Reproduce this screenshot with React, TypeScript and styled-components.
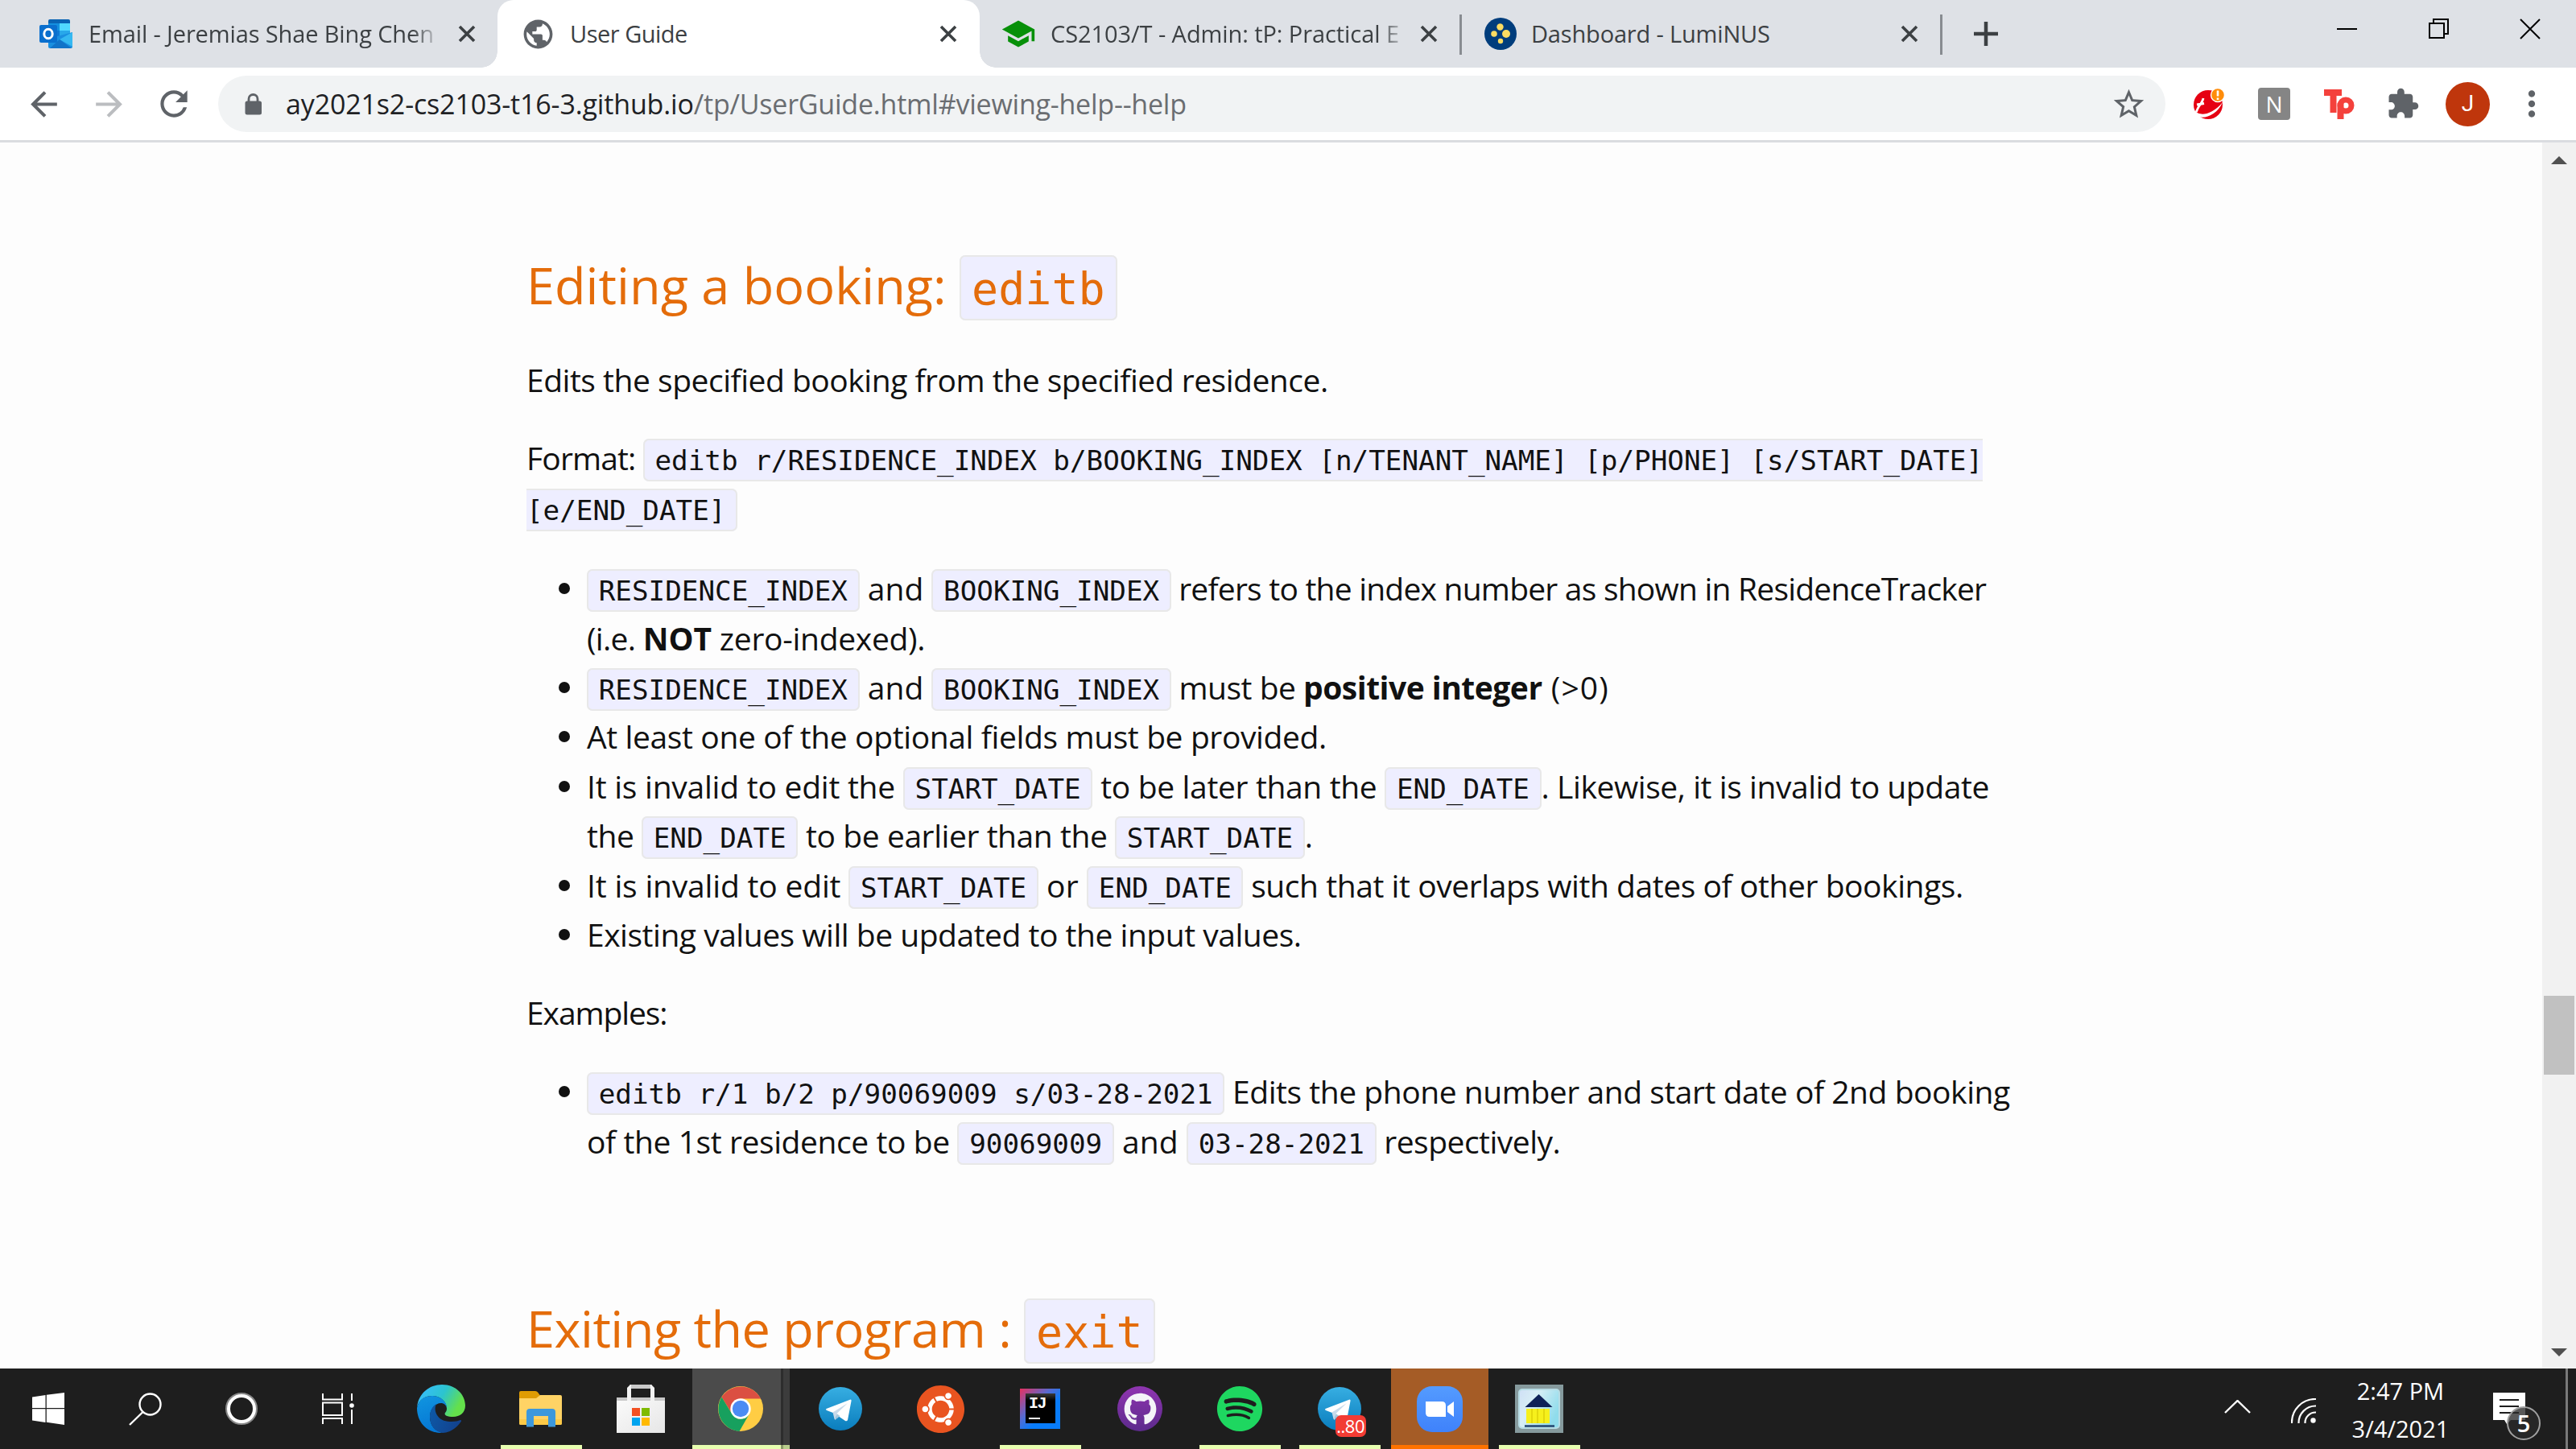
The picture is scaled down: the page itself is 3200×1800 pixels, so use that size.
import React from 'react';
import styled, { createGlobalStyle, css } from 'styled-components';
import { MdArrowBack, MdArrowForward, MdRefresh, MdStarBorder, MdExtension, MdMoreVert, MdPublic, MdSchool } from 'react-icons/md';
import { FaGithub, FaSpotify, FaUbuntu } from 'react-icons/fa';

const sans = `"Open Sans", "Noto Sans", sans-serif`;
const mono = `"DejaVu Sans Mono", monospace`;

const Global = createGlobalStyle`
  *, *::before, *::after { box-sizing: border-box; }
  html, body { margin: 0; padding: 0; overflow: hidden; }
  body { font-family: ${sans}; }
  svg { display: block; flex: none; }
`;

const Screen = styled.div`
  width: 3200px;
  height: 1800px;
  display: flex;
  flex-direction: column;
  background: #fdfdfd;
  overflow: hidden;
`;

/* ---------- tab strip ---------- */
const TabStrip = styled.div`
  height: 84px;
  flex: none;
  display: flex;
  background: #dee1e6;
`;

const Tab = styled.div<{ $w: number; $pl: number; $active?: boolean }>`
  width: ${p => p.$w}px;
  padding-left: ${p => p.$pl}px;
  flex: none;
  display: flex;
  align-items: center;
  height: 84px;
  position: relative;
  ${p =>
    p.$active &&
    css`
      background: #fff;
      border-radius: 20px 20px 0 0;
      &::before,
      &::after {
        content: '';
        position: absolute;
        bottom: 0;
        width: 20px;
        height: 20px;
      }
      &::before {
        left: -20px;
        background: radial-gradient(circle at 0 0, transparent 19.5px, #fff 20px);
      }
      &::after {
        right: -20px;
        background: radial-gradient(circle at 100% 0, transparent 19.5px, #fff 20px);
      }
    `}
`;

const TabIcon = styled.div<{ $w: number; $mr: number }>`
  width: ${p => p.$w}px;
  margin-right: ${p => p.$mr}px;
  flex: none;
  display: flex;
  justify-content: center;
  color: #5f6368;
`;

const TabTitle = styled.div<{ $w: number; $fade?: boolean; $ls?: number }>`
  width: ${p => p.$w}px;
  flex: none;
  white-space: nowrap;
  font-size: 29px;
  line-height: 44px;
  letter-spacing: ${p => p.$ls ?? 0}px;
  color: #3c4043;
  ${p => p.$fade && css`-webkit-mask-image: linear-gradient(90deg, #000 calc(100% - 36px), transparent);`}
`;

const TabDivider = styled.div`
  width: 3px;
  height: 50px;
  margin-top: 18px;
  flex: none;
  background: #888c91;
`;

const NewTab = styled.div`
  width: 108px;
  flex: none;
  display: flex;
  align-items: center;
  justify-content: center;
`;

const WindowControls = styled.div`
  margin-left: auto;
  display: flex;
  height: 71px;
`;

const WindowButton = styled.div`
  width: 114px;
  display: flex;
  align-items: center;
  justify-content: center;
`;

/* ---------- toolbar ---------- */
const Toolbar = styled.div`
  height: 90px;
  flex: none;
  display: flex;
  align-items: center;
  background: #fff;
`;

const NavButtons = styled.div`
  width: 271px;
  flex: none;
  display: flex;
  align-items: center;
  padding-left: 30px;
  gap: 31.5px;
  color: #5f6368;
`;

const Faded = styled.div`
  color: #bbbdc0;
`;

const Omnibox = styled.div`
  width: 2419px;
  height: 70px;
  flex: none;
  border-radius: 35px;
  background: #f1f3f4;
  display: flex;
  align-items: center;
  padding: 0 23px 0 28px;
  color: #5f6368;
`;

const Url = styled.div`
  margin-left: 25px;
  flex: 1;
  font-size: 34px;
  line-height: 50px;
  letter-spacing: -0.22px;
  white-space: nowrap;
  color: #6a6d71;
`;

const UrlHost = styled.span`
  color: #202124;
  letter-spacing: -0.15px;
`;

const Extensions = styled.div`
  flex: 1;
  display: flex;
  align-items: center;
  color: #5f6368;
`;

const ExtSlot = styled.div<{ $w: number }>`
  width: ${p => p.$w}px;
  flex: none;
  display: flex;
  align-items: center;
  justify-content: center;
`;

const NoteBadge = styled.div`
  width: 40px;
  height: 40px;
  border-radius: 4px;
  background: #858585;
  color: #fff;
  font: 400 28px/40px ${sans};
  text-align: center;
`;

const Avatar = styled.div`
  width: 55px;
  height: 55px;
  border-radius: 50%;
  background: #bf360c;
  color: #fff;
  font: 400 28px/54px Roboto, sans-serif;
  text-align: center;
`;

const ToolbarEdge = styled.div`
  height: 3px;
  flex: none;
  background: #dadce0;
`;

/* ---------- page ---------- */
const Viewport = styled.div`
  height: 1523px;
  flex: none;
  display: flex;
  overflow: hidden;
`;

const Article = styled.main`
  flex: 1;
  padding: 129px 0 0 654px;
  color: #111;
  font-size: 39px;
  line-height: 61.4px;
  white-space: pre;
  overflow: hidden;
`;

const Heading = styled.h2<{ $mt: number }>`
  margin: ${p => p.$mt}px 0 0;
  font-size: 63px;
  font-weight: 400;
  line-height: 96px;
  color: #e46c0a;
`;

const Para = styled.p<{ $mt: number }>`
  margin: ${p => p.$mt}px 0 0;
`;

const List = styled.ul<{ $mt: number }>`
  list-style: none;
  margin: ${p => p.$mt}px 0 0;
  padding: 0 0 0 40px;
`;

const Item = styled.li`
  display: grid;
  grid-template-columns: 14px auto;
  column-gap: 21px;
  &::before {
    content: '';
    width: 14px;
    height: 14px;
    margin-top: 24px;
    border-radius: 50%;
    background: #111;
  }
`;

const Code = styled.code`
  font-family: ${mono};
  font-size: 34.25px;
  line-height: 0;
  padding: 5px 12.7px 4px;
  border: 2px solid #e8e8e8;
  border-radius: 7px;
  background: #eeeeff;
`;

const HeadingCode = styled(Code)`
  font-size: 55px;
  padding: 8px 13px 5px;
`;

const T = styled.span<{ $ls?: number; $b?: boolean }>`
  letter-spacing: ${p => p.$ls ?? 0}px;
  font-weight: ${p => (p.$b ? 700 : 400)};
`;

const Scrollbar = styled.div`
  width: 42px;
  flex: none;
  background: #f1f1f1;
  display: flex;
  flex-direction: column;
  align-items: center;
  padding: 17px 0 15px;
`;

const Thumb = styled.div`
  width: 38px;
  height: 98px;
  margin-top: 1033px;
  background: #c1c1c1;
`;

const Spring = styled.div`
  flex: 1;
`;

/* ---------- taskbar ---------- */
const Taskbar = styled.div`
  height: 100px;
  flex: none;
  display: flex;
  background: #1e1e1e;
  color: #fff;
`;

const SystemCell = styled.div`
  width: 120px;
  height: 80px;
  margin-top: 10px;
  display: flex;
  align-items: center;
  justify-content: center;
`;

const Apps = styled.div`
  display: flex;
  gap: 3.03px;
  margin-left: 7.5px;
`;

const AppCell = styled.div<{ $bg?: string; $line?: string; $full?: boolean }>`
  width: 121px;
  height: 100px;
  position: relative;
  display: flex;
  align-items: center;
  justify-content: center;
  background: ${p => p.$bg ?? 'transparent'};
  &::after {
    content: '';
    position: absolute;
    bottom: 0;
    left: ${p => (p.$full ? 0 : 10)}px;
    right: ${p => (p.$full ? 0 : 10)}px;
    height: 5px;
    background: ${p => p.$line ?? 'transparent'};
  }
`;

const Disc = styled.div<{ $s: number; $bg: string }>`
  width: ${p => p.$s}px;
  height: ${p => p.$s}px;
  border-radius: 50%;
  background: ${p => p.$bg};
  display: flex;
  align-items: center;
  justify-content: center;
`;

const IdeFrame = styled.div`
  width: 50px;
  height: 50px;
  padding: 6px 7px;
  background: linear-gradient(135deg, #e8305f 0%, #5a6ad0 38%, #087cfa 62%);
`;

const IdeFace = styled.div`
  width: 37px;
  height: 37px;
  background: linear-gradient(#3a3a3a, #000 9px);
  color: #fff;
  font: 700 20px/25px "Liberation Mono", monospace;
  letter-spacing: -1.5px;
  padding: 0 4px;
  &::after {
    content: '';
    display: block;
    width: 14px;
    height: 2px;
    margin-top: 5px;
    background: #fff;
  }
`;

const CountBadge = styled.div`
  position: absolute;
  left: 55px;
  top: 58px;
  width: 38px;
  height: 27px;
  border-radius: 7px;
  background: #f23c34;
  color: #fff;
  font: 400 22px/27px ${sans};
  letter-spacing: -0.5px;
  text-align: center;
`;

const StackEdge = styled.div`
  position: absolute;
  z-index: 1;
  right: 0;
  top: 0;
  width: 11px;
  height: 100px;
  background: rgba(0, 0, 0, 0.2);
  border-left: 3px solid rgba(0, 0, 0, 0.25);
`;

const Tray = styled.div`
  margin-left: auto;
  display: flex;
  align-items: center;
`;

const TraySlot = styled.div<{ $pt?: number; $pb?: number }>`
  width: 82px;
  padding: ${p => p.$pt ?? 0}px 0 ${p => p.$pb ?? 0}px;
  display: flex;
  justify-content: center;
`;

const Clock = styled.div`
  width: 130px;
  height: 100px;
  margin-left: 15px;
  padding-top: 4px;
  text-align: center;
  font-size: 29px;
  line-height: 47px;
  white-space: nowrap;
`;

const ShowDesktop = styled.div`
  width: 13px;
  height: 100px;
  border-left: 3px solid #7a7a7a;
`;

const Notice = styled.div`
  width: 90px;
  height: 100px;
  margin-left: 50px;
  position: relative;
  padding-top: 30px;
`;

const NoticeCount = styled.div`
  position: absolute;
  left: 17px;
  top: 47px;
  width: 42px;
  height: 42px;
  border-radius: 50%;
  border: 2px solid #a0a0a0;
  background: rgba(42, 42, 42, 0.78);
  font: 600 29px/38px ${sans};
  text-align: center;
`;

/* ---------- drawings ---------- */
const Cross = () => (
  <svg width="22" height="22" viewBox="0 0 22 22" stroke="#3c4043" strokeWidth="3.6">
    <path d="M2 2 20 20M20 2 2 20" />
  </svg>
);

const Lock = () => (
  <svg width="31" height="28" viewBox="0 0 31 28">
    <path d="M10 12V8a5.500 5.500 0 0 1 11 0v4" fill="none" stroke="#5f6368" strokeWidth="2.800" />
    <rect x="5.500" y="10.500" width="20.500" height="17" rx="2.500" fill="#5f6368" />
  </svg>
);

const Outlook = () => (
  <svg width="41" height="36" viewBox="0 0 41 36">
    <path d="M13 0h23q2 0 2 2v22H11V2q0-2 2-2z" fill="#0a64b4" />
    <path d="M11 5h14v9H11z" fill="#1490df" />
    <path d="M25 5h13v9H25z" fill="#50d9ff" />
    <path d="M11 14h14v10H11z" fill="#0f78d4" />
    <path d="M25 14h13v10H25z" fill="#28a8ea" />
    <path d="M11 24 41 16v18q0 2-2 2H13q-2 0-2-2z" fill="#1a8fe0" />
    <path d="M25 25 41 16v18z" fill="#35b8f1" />
    <path d="m13 36 12-11 15 11z" fill="#1273c8" />
    <rect y="7" width="22" height="22" rx="2" fill="#0a6fce" />
    <ellipse cx="11" cy="18" rx="5.2" ry="5.8" fill="none" stroke="#fff" strokeWidth="3" />
  </svg>
);

const Luminus = () => (
  <svg width="40" height="40" viewBox="0 0 40 40">
    <circle cx="20" cy="20" r="20" fill="#003d7c" />
    <g fill="#fbdc62">
      <circle cx="19.5" cy="11.5" r="4.2" />
      <circle cx="12" cy="20" r="3.8" />
      <circle cx="27" cy="20" r="5" />
      <circle cx="20" cy="29" r="3.2" />
    </g>
  </svg>
);

const Trend = () => (
  <svg width="40" height="40" viewBox="0 0 40 40">
    <circle cx="19" cy="21" r="18" fill="#e60012" />
    <path d="M3.500 28c2 7 19 8 33.500-10-8 18-27 23-34.500 15z" fill="#fff" />
    <path d="M13 13C12 19 6 23 4.500 30M5 21l9-1.500" fill="none" stroke="#fff" strokeWidth="2.800" />
    <circle cx="31" cy="9" r="8.500" fill="#ff8c0a" stroke="#fff" strokeWidth="1.4" />
    <path d="M31 3.500v7M31 12.500v2.500" stroke="#fff" strokeWidth="2.600" />
  </svg>
);

const Tp = () => (
  <svg width="38" height="37" viewBox="0 0 38 37" fill="none" stroke="#f4413c">
    <path d="M0 4h22" strokeWidth="8" />
    <path d="M11.500 4v25" strokeWidth="8" />
    <path d="M20.500 17v20" strokeWidth="8" />
    <circle cx="27" cy="20" r="7" strokeWidth="7" />
  </svg>
);

const Windows = () => (
  <svg width="40" height="40" viewBox="0 0 40 40" fill="#fff">
    <path d="M0 5.500 16.500 3v16H0zM17.800 2.800 40 0v19H17.800zM0 20.300h16.500V37L0 34.500zM17.800 20.300H40V40l-22.200-3.200z" />
  </svg>
);

const Search = () => (
  <svg width="41" height="41" viewBox="0 0 41 41" fill="none" stroke="#fff" strokeWidth="2.400">
    <circle cx="26.500" cy="14.500" r="13" />
    <path d="M17.500 24 1 40" />
  </svg>
);

const Cortana = () => (
  <svg width="40" height="40" viewBox="0 0 40 40" fill="none">
    <circle cx="20" cy="20" r="18.500" stroke="#8a8a8a" strokeWidth="3" />
    <circle cx="20" cy="20" r="16" stroke="#fff" strokeWidth="4" />
  </svg>
);

const TaskView = () => (
  <svg width="40" height="38" viewBox="0 0 40 38" fill="none" stroke="#fff" strokeWidth="2">
    <path d="M1 0v7.500h24V0M1 38v-7h24v7M1 11.500h24v15.500H1zM37 0v9M37 20v18" />
    <circle cx="37" cy="15" r="2.800" fill="#fff" stroke="none" />
  </svg>
);

const Edge = () => (
  <svg width="60" height="60" viewBox="0 0 60 60">
    <defs>
      <linearGradient id="edgeTop" x1="0" y1="0.2" x2="1" y2="0.6">
        <stop offset="0" stopColor="#38bcff" />
        <stop offset="0.5" stopColor="#2cc4cf" />
        <stop offset="0.9" stopColor="#64e04b" />
      </linearGradient>
      <linearGradient id="edgeBody" x1="0" y1="0" x2="0.3" y2="1">
        <stop offset="0" stopColor="#1196e0" />
        <stop offset="1" stopColor="#0577d4" />
      </linearGradient>
      <linearGradient id="edgeDeep" x1="0" y1="0" x2="1" y2="0.4">
        <stop offset="0" stopColor="#0d5aa8" />
        <stop offset="1" stopColor="#12438f" />
      </linearGradient>
    </defs>
    <path d="M0 28C2 11 15 0 31 0c18 0 29 13 29 26 0 9-7 14-15 14-7 0-12-2-10-5 1-1 2-3 2-5 0-9-8-16-18-16C9 14 2 20 0 28z" fill="url(#edgeTop)" />
    <path d="M0 29C2 19 9 14 19 14c10 0 18 7 18 15-1-4-4-6-7-6-8 0-14 8-14 17 0 11 7 18 16 20C14 61 0 48 0 29z" fill="url(#edgeBody)" />
    <path d="M24 24c-2 4-2 9 1 14 4 7 12 8 18 8 5 0 8-1 11-2 1 0 1 1 1 1.500C49 55 39 60 32 60c-9-1-16-9-16-20 0-7 3-13 8-16z" fill="url(#edgeDeep)" />
  </svg>
);

const Explorer = () => (
  <svg width="54" height="46" viewBox="0 0 54 46">
    <path d="M0 3q0-2 2-2h18q2 0 3 1.500l3 4-4 4H0z" fill="#e09c02" />
    <path d="M0 10h21l5-4h25q2 0 2 2v33q0 2-2 2H2q-2 0-2-2z" fill="#ffd365" />
    <path d="M0 36h53v5q0 2-2 2H2q-2 0-2-2z" fill="#fbc947" />
    <path d="M9 45.500V27q0-4 4-4h28q4 0 4 4v18.500h-9V32H18v13.500z" fill="#3c98dc" />
  </svg>
);

const Store = () => (
  <svg width="60" height="60" viewBox="0 0 60 60">
    <defs>
      <linearGradient id="bag" x1="0" y1="0" x2="1" y2="1">
        <stop offset="0" stopColor="#fafafa" />
        <stop offset="1" stopColor="#e6e6e6" />
      </linearGradient>
    </defs>
    <path d="M0 16h60v5H0z" fill="#c8c8c8" />
    <path d="M16.500 0h27v5h-27z" fill="#c9c9c9" />
    <path d="M13 20V4l4-4h1v20zM47 20V4l-4-4h-1v20z" fill="#f2f2f2" />
    <path d="M0 20h60v40H0z" fill="url(#bag)" />
    <path d="M19 29h10v10H19z" fill="#f25022" />
    <path d="M31 29h10v10H31z" fill="#7fba00" />
    <path d="M19 41h10v10H19z" fill="#00a4ef" />
    <path d="M31 41h10v10H31z" fill="#ffb900" />
  </svg>
);

const Chrome = () => (
  <svg width="56" height="56" viewBox="0 0 56 56">
    <circle cx="28" cy="28" r="28" fill="#ffcd44" />
    <path d="M28 15.500h25A28 28 0 0 0 4.500 13.500L16 32l6-12z" fill="#db4f42" />
    <path d="M4.500 13.500A28 28 0 0 0 26.500 56L38.500 35l-5 5-9 .5-9-9z" fill="#17a05e" />
    <circle cx="28" cy="28" r="12.700" fill="#fff" />
    <circle cx="28" cy="28" r="10.200" fill="#4b8bf4" />
  </svg>
);

const Telegram = () => (
  <svg width="54" height="54" viewBox="0 0 54 54">
    <defs>
      <linearGradient id="tg" x1="0" y1="0" x2="0" y2="1">
        <stop offset="0" stopColor="#37aee2" />
        <stop offset="1" stopColor="#0a7dbd" />
      </linearGradient>
    </defs>
    <circle cx="27" cy="27" r="27" fill="url(#tg)" />
    <path d="M9.500 27 39.500 15.500q1.500 0 1 2L36 41q-1 2-3 1L19 32.500l-9-3.500q-2-1-.5-2z" fill="#fff" />
    <path d="M17.500 31.500 36 20 22.500 33 21 40.500q-1 .5-1.500-1z" fill="#c8daea" />
    <path d="m21 40.500 1.500-7.500 4 3z" fill="#a9c9dd" />
  </svg>
);

const ZoomLogo = () => (
  <svg width="57" height="57" viewBox="0 0 57 57">
    <defs>
      <linearGradient id="zm" x1="0" y1="0" x2="0" y2="1">
        <stop offset="0" stopColor="#549bff" />
        <stop offset="1" stopColor="#3f82fb" />
      </linearGradient>
    </defs>
    <rect width="57" height="57" rx="19" fill="url(#zm)" />
    <path d="M11 19h20q5 0 5 5v14H16q-5 0-5-5zM38 25l8-6v19l-8-6z" fill="#fff" />
  </svg>
);

const HouseApp = () => (
  <svg width="60" height="60" viewBox="0 0 60 60">
    <defs>
      <linearGradient id="hs" x1="0" y1="0" x2="1" y2="0.5">
        <stop offset="0" stopColor="#cfe0f6" />
        <stop offset="0.4" stopColor="#d8eef5" />
        <stop offset="1" stopColor="#8fdcec" />
      </linearGradient>
    </defs>
    <path d="M0 0h60v60H0z" fill="#869a9d" />
    <rect x="5" y="6" width="50" height="48" rx="4" fill="url(#hs)" stroke="#b7dce4" strokeWidth="2" />
    <path d="m29.500 12 17 16h-34z" fill="#0f2157" />
    <path d="M14 30h29v18H14z" fill="#f6f01c" />
    <path d="M21 30v18M28 30v18M36 30v18" stroke="#ddd00a" strokeWidth="1.500" />
    <path d="M12 51.500h37" stroke="#23456f" strokeWidth="2.500" />
  </svg>
);

const LIME = '#e8ffb0';

export default function App() {
  return (
    <Screen>
      <Global />
      <TabStrip>
        <Tab $w={618} $pl={49}>
          <TabIcon $w={41} $mr={20}><Outlook /></TabIcon>
          <TabTitle $w={438} $ls={-0.13} $fade>Email - Jeremias Shae Bing Chen</TabTitle>
          <TabIcon $w={64} $mr={0}><Cross /></TabIcon>
        </Tab>
        <Tab $w={599} $pl={28} $active>
          <TabIcon $w={44} $mr={18}><MdPublic size={43} /></TabIcon>
          <TabTitle $w={430} $ls={-0.5}>User Guide</TabTitle>
          <TabIcon $w={80} $mr={0}><Cross /></TabIcon>
        </Tab>
        <Tab $w={596} $pl={26}>
          <TabIcon $w={44} $mr={18}><MdSchool size={44} color="#079009" /></TabIcon>
          <TabTitle $w={444} $ls={-0.08} $fade>CS2103/T - Admin: tP: Practical E</TabTitle>
          <TabIcon $w={52} $mr={0}><Cross /></TabIcon>
        </Tab>
        <TabDivider />
        <Tab $w={594} $pl={28}>
          <TabIcon $w={40} $mr={18}><Luminus /></TabIcon>
          <TabTitle $w={430} $ls={-0.17}>Dashboard - LumiNUS</TabTitle>
          <TabIcon $w={80} $mr={0}><Cross /></TabIcon>
        </Tab>
        <TabDivider />
        <NewTab>
          <svg width="30" height="30" viewBox="0 0 30 30" stroke="#3c4043" strokeWidth="4.500"><path d="M15 0v30M0 15h30" /></svg>
        </NewTab>
        <WindowControls>
          <WindowButton><svg width="25" height="2"><path d="M0 0h25v2H0z" /></svg></WindowButton>
          <WindowButton>
            <svg width="25" height="25" viewBox="0 0 25 25" fill="none" stroke="#000" strokeWidth="2"><path d="M1 6h18v18H1zM6 6V1h18v18h-5" /></svg>
          </WindowButton>
          <WindowButton>
            <svg width="26" height="26" viewBox="0 0 26 26" stroke="#000" strokeWidth="2"><path d="M1 1 25 25M25 1 1 25" /></svg>
          </WindowButton>
        </WindowControls>
      </TabStrip>

      <Toolbar>
        <NavButtons>
          <MdArrowBack size={49} />
          <Faded><MdArrowForward size={49} /></Faded>
          <MdRefresh size={50} />
        </NavButtons>
        <Omnibox>
          <Lock />
          <Url><UrlHost>ay2021s2-cs2103-t16-3.github.io</UrlHost>/tp/UserGuide.html#viewing-help--help</Url>
          <MdStarBorder size={45} />
        </Omnibox>
        <Extensions>
          <ExtSlot $w={107}><Trend /></ExtSlot>
          <ExtSlot $w={56}><NoteBadge>N</NoteBadge></ExtSlot>
          <ExtSlot $w={105}><Tp /></ExtSlot>
          <ExtSlot $w={54}><MdExtension size={42} /></ExtSlot>
          <ExtSlot $w={107}><Avatar>J</Avatar></ExtSlot>
          <ExtSlot $w={52}><MdMoreVert size={50} /></ExtSlot>
        </Extensions>
      </Toolbar>
      <ToolbarEdge />

      <Viewport>
        <Article>
          <Heading $mt={0}>
            <T $ls={0.03}>Editing a booking: </T><HeadingCode>editb</HeadingCode>
          </Heading>
          <Para $mt={39.4}><T $ls={-0.48}>Edits the specified booking from the specified residence.</T></Para>
          <Para $mt={35.6}>
            <T $ls={-0.85}>Format: </T>
            <Code>editb r/RESIDENCE_INDEX b/BOOKING_INDEX [n/TENANT_NAME] [p/PHONE] [s/START_DATE]<br />[e/END_DATE]</Code>
          </Para>
          <List $mt={38.9}>
            <Item>
              <div>
                <Code>RESIDENCE_INDEX</Code><T> and </T><Code>BOOKING_INDEX</Code><T $ls={-0.78}> refers to the index number as shown in ResidenceTracker</T><br />
                <T $ls={-0.7}>(i.e. </T><T $b>NOT</T><T $ls={-0.3}> zero-indexed).</T>
              </div>
            </Item>
            <Item>
              <div>
                <Code>RESIDENCE_INDEX</Code><T> and </T><Code>BOOKING_INDEX</Code><T $ls={-0.5}> must be </T><T $b $ls={-0.5}>positive integer</T><T $ls={1.1}> (&gt;0)</T>
              </div>
            </Item>
            <Item><div><T $ls={-0.38}>At least one of the optional fields must be provided.</T></div></Item>
            <Item>
              <div>
                <T $ls={-0.24}>It is invalid to edit the </T><Code>START_DATE</Code><T $ls={-0.34}> to be later than the </T><Code>END_DATE</Code><T $ls={-0.43}>. Likewise, it is invalid to update</T><br />
                <T $ls={-0.45}>the </T><Code>END_DATE</Code><T $ls={-0.43}> to be earlier than the </T><Code>START_DATE</Code><T>.</T>
              </div>
            </Item>
            <Item>
              <div>
                <T $ls={-0.18}>It is invalid to edit </T><Code>START_DATE</Code><T $ls={0.15}> or </T><Code>END_DATE</Code><T $ls={-0.43}> such that it overlaps with dates of other bookings.</T>
              </div>
            </Item>
            <Item><div><T $ls={-0.48}>Existing values will be updated to the input values.</T></div></Item>
          </List>
          <Para $mt={35.6}><T $ls={-1.1}>Examples:</T></Para>
          <List $mt={36.9}>
            <Item>
              <div>
                <Code>editb r/1 b/2 p/90069009 s/03-28-2021</Code><T $ls={-0.45}> Edits the phone number and start date of 2nd booking</T><br />
                <T $ls={-0.41}>of the 1st residence to be </T><Code>90069009</Code><T $ls={0.1}> and </T><Code>03-28-2021</Code><T $ls={-0.5}> respectively.</T>
              </div>
            </Item>
          </List>
          <Heading $mt={153.5}>
            <T $ls={-0.5}>Exiting the program : </T><HeadingCode>exit</HeadingCode>
          </Heading>
        </Article>
        <Scrollbar>
          <svg width="20" height="10" viewBox="0 0 20 10" fill="#505050"><path d="M10 0 20 10H0z" /></svg>
          <Thumb />
          <Spring />
          <svg width="20" height="10" viewBox="0 0 20 10" fill="#505050"><path d="M0 0h20L10 10z" /></svg>
        </Scrollbar>
      </Viewport>

      <Taskbar>
        <SystemCell><Windows /></SystemCell>
        <SystemCell><Search /></SystemCell>
        <SystemCell><Cortana /></SystemCell>
        <SystemCell><TaskView /></SystemCell>
        <Apps>
          <AppCell><Edge /></AppCell>
          <AppCell $line={LIME}><Explorer /></AppCell>
          <AppCell><Store /></AppCell>
          <AppCell $bg="#4b4b4b" $line={LIME} $full><Chrome /><StackEdge /></AppCell>
          <AppCell><Telegram /></AppCell>
          <AppCell><Disc $s={56} $bg="#fff"><FaUbuntu size={61} color="#e95420" /></Disc></AppCell>
          <AppCell $line={LIME}><IdeFrame><IdeFace>IJ</IdeFace></IdeFrame></AppCell>
          <AppCell><Disc $s={56} $bg="linear-gradient(#8f35b0, #5c2a8c)"><FaGithub size={41} color="#f4f4f8" /></Disc></AppCell>
          <AppCell $line={LIME}><FaSpotify size={58} color="#1ed760" /></AppCell>
          <AppCell $line={LIME}><Telegram /><CountBadge>..80</CountBadge></AppCell>
          <AppCell $bg="#a55c26" $line="#ff7200" $full><ZoomLogo /></AppCell>
          <AppCell $line={LIME}><HouseApp /></AppCell>
        </Apps>
        <Tray>
          <TraySlot $pb={6}>
            <svg width="33" height="17" viewBox="0 0 33 17" fill="none" stroke="#fff" strokeWidth="2.400"><path d="m1 16 15.500-15L32 16" /></svg>
          </TraySlot>
          <TraySlot $pt={4}>
            <svg width="31" height="31" viewBox="0 0 31 31" fill="none" stroke="#fff" strokeWidth="2.200">
              <path d="M1 31A29 29 0 0 1 31 1M9.500 31A21 21 0 0 1 31 9.500M17.500 31A13 13 0 0 1 31 17.500" />
              <circle cx="27.500" cy="27.500" r="3.200" fill="#fff" stroke="none" />
            </svg>
          </TraySlot>
          <Clock>2:47 PM<br />3/4/2021</Clock>
          <Notice>
            <svg width="40" height="40" viewBox="0 0 40 40"><path d="M0 0h40v34H22l-5 5-3-5H0z" fill="#fff" /><path d="M8 9h24M8 17h24M8 25h24" stroke="#1e1e1e" strokeWidth="2" /></svg>
            <NoticeCount>5</NoticeCount>
          </Notice>
          <ShowDesktop />
        </Tray>
      </Taskbar>
    </Screen>
  );
}
